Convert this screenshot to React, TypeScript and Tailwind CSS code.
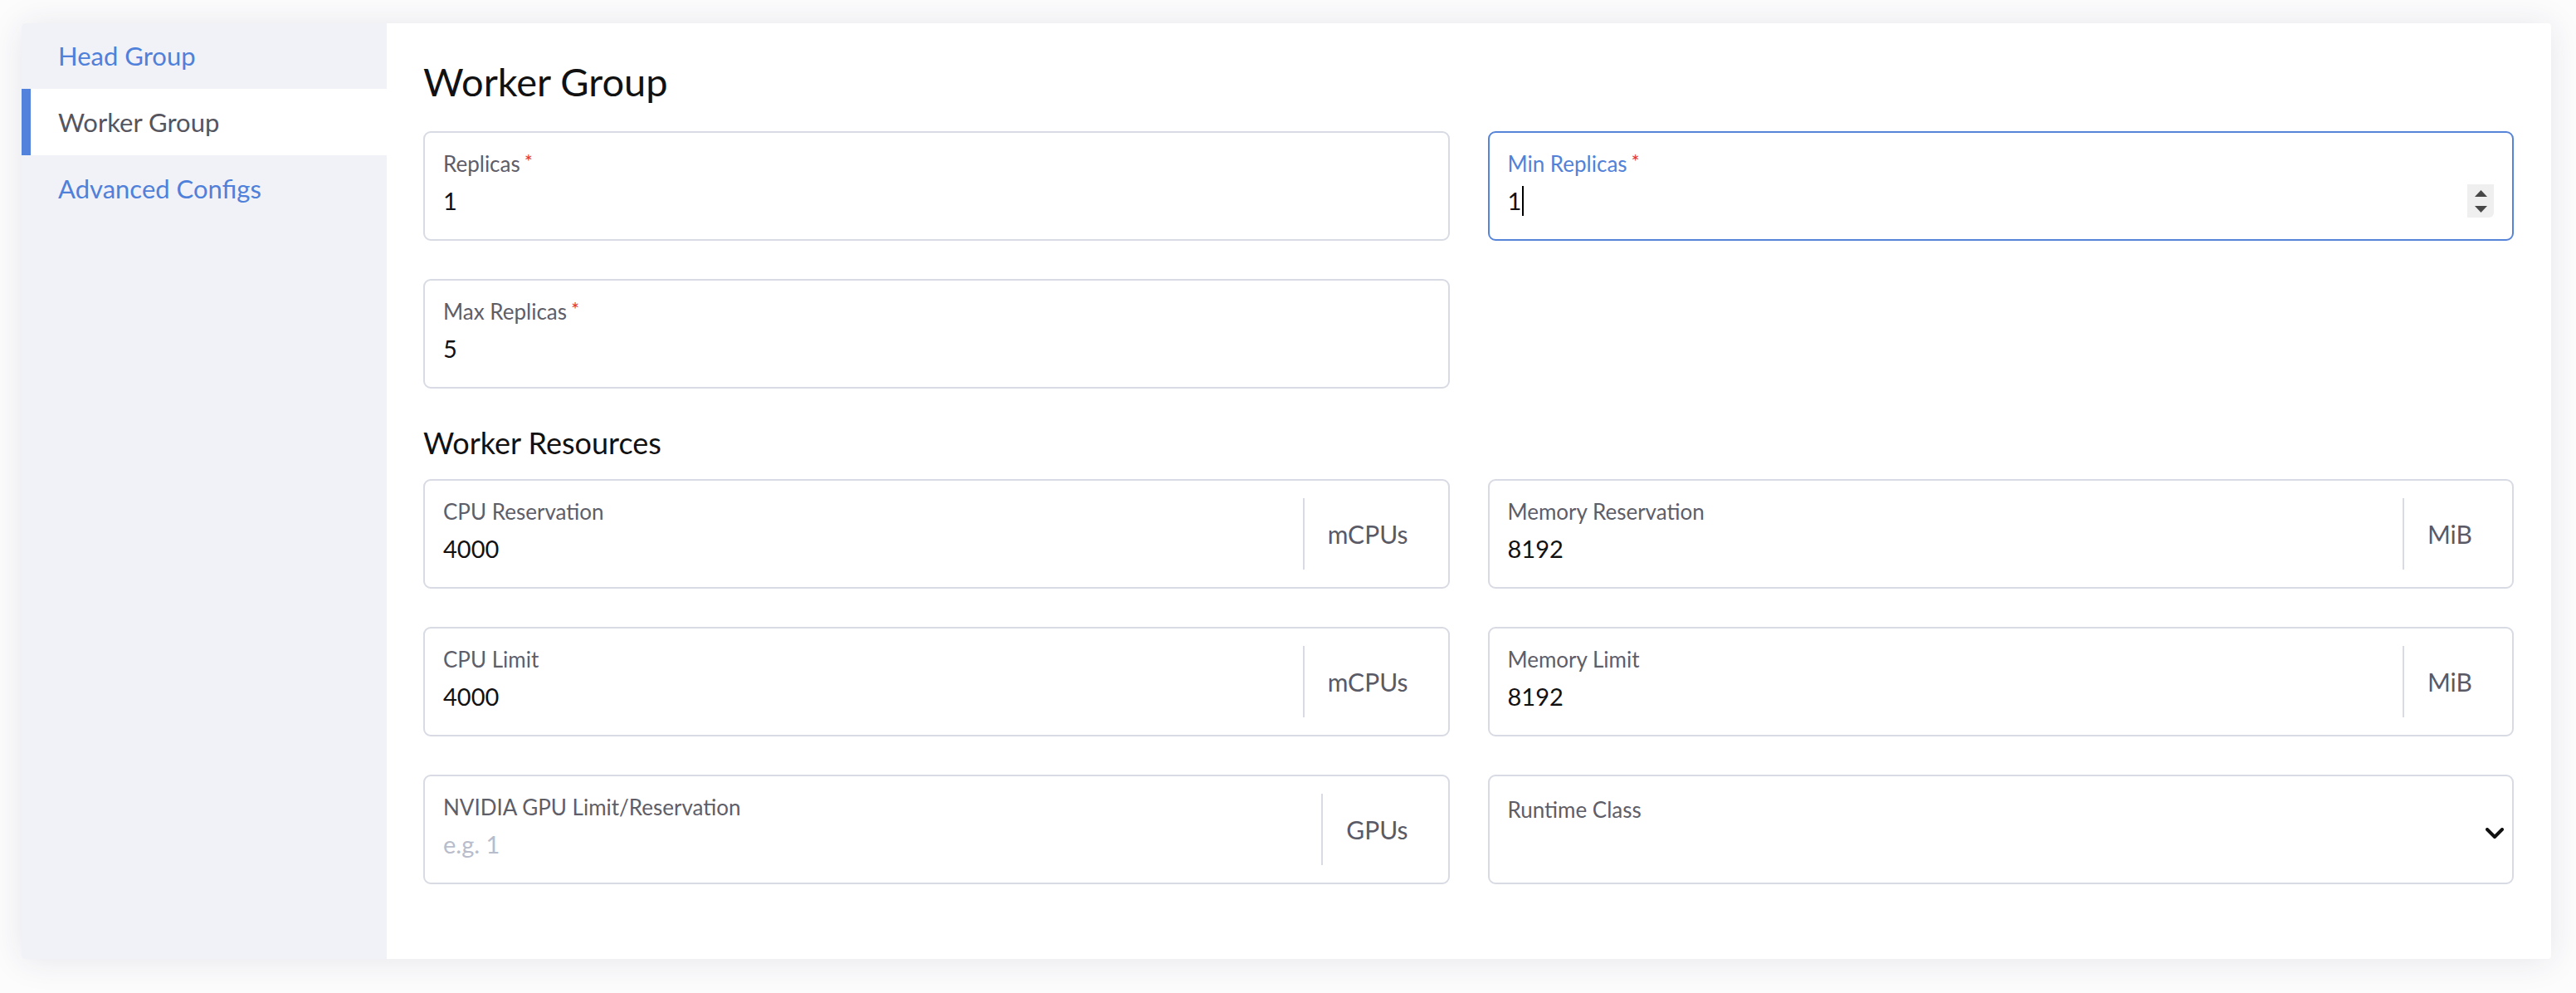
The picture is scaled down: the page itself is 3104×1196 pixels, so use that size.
import React from "react";

const FONT = { fontFamily: "Lato, 'Noto Sans', 'Liberation Sans', sans-serif" };

function Req() {
  return <span className="ml-[5px] text-[24px] leading-none text-[#e53935] relative -top-[4px]">*</span>;
}

function Label({ children, req, blue }: { children: React.ReactNode; req?: boolean; blue?: boolean }) {
  return (
    <div className={`text-[26px] leading-[32px] ${blue ? "text-[#5282d8]" : "text-[#5e5e69]"} whitespace-nowrap`}>
      {children}
      {req && <Req />}
    </div>
  );
}

function Field({
  label,
  value,
  req,
  suffix,
  placeholder,
}: {
  label: string;
  value?: string;
  req?: boolean;
  suffix?: string;
  placeholder?: string;
}) {
  return (
    <div className="h-[132px] border-2 border-[#d8dae4] rounded-[9px] bg-white flex">
      <div className="flex-1 pl-[22px] pr-[22px] pt-[21px]">
        <Label req={req}>{label}</Label>
        <div className="mt-[11px] text-[29px] leading-[36px]">
          {value ? (
            <span className="text-[#111111]">{value}</span>
          ) : (
            <span className="text-[#b8bccb]">{placeholder}</span>
          )}
        </div>
      </div>
      {suffix && (
        <div className="my-[21px] border-l-2 border-[#d8dae4] pl-[28px] pr-[48px] flex items-center text-[30px] text-[#5a5a66]">
          {suffix}
        </div>
      )}
    </div>
  );
}

function FocusedField() {
  return (
    <div className="h-[132px] border-2 border-[#5684d8] rounded-[9px] bg-white pl-[22px] pr-[22px] pt-[21px]">
      <Label req blue>
        Min Replicas
      </Label>
      <div className="mt-[11px] flex items-center justify-between h-[36px]">
        <div className="flex items-center text-[29px] leading-[36px] text-[#111111]">
          <span>1</span>
          <span className="inline-block w-[2px] h-[36px] bg-black ml-[1px]" />
        </div>
        <div className="w-[32px] h-[40px] bg-[#efefef] rounded-br-[6px] flex flex-col items-center justify-center gap-[11px]">
          <svg width="15" height="8" viewBox="0 0 15 8">
            <polygon points="7.5,0 15,8 0,8" fill="#474747" />
          </svg>
          <svg width="15" height="8" viewBox="0 0 15 8">
            <polygon points="0,0 15,0 7.5,8" fill="#474747" />
          </svg>
        </div>
      </div>
    </div>
  );
}

function SelectField({ label }: { label: string }) {
  return (
    <div className="h-[132px] border-2 border-[#d8dae4] rounded-[9px] bg-white flex pl-[22px] pr-[10px]">
      <div className="flex-1 pt-[24px]">
        <Label>{label}</Label>
      </div>
      <div className="flex items-center pt-[10px]">
        <svg width="22" height="14" viewBox="0 0 22 14">
          <polyline points="2,2 11,11 20,2" fill="none" stroke="#111" strokeWidth="4" strokeLinecap="round" strokeLinejoin="round" />
        </svg>
      </div>
    </div>
  );
}

export default function App() {
  return (
    <div className="min-h-screen bg-[#fcfcfd] pt-[28px] pl-[26px] pr-[30px] pb-[41px]" style={FONT}>
      <div className="flex h-[1127px] bg-white rounded-[4px] overflow-hidden shadow-[0_2px_40px_rgba(40,40,70,0.10)]">
        <aside className="w-[440px] bg-[#f1f2f7] flex flex-col">
          <div className="h-[79px] flex items-center pl-[44px] text-[31px] text-[#4f80da]">Head Group</div>
          <div className="h-[80px] flex items-center bg-white relative pl-[44px] text-[31px] text-[#55555f]">
            <span className="absolute left-0 top-0 bottom-0 w-[11px] bg-[#5282dc]" />
            Worker Group
          </div>
          <div className="h-[80px] flex items-center pl-[44px] text-[31px] text-[#4f80da]">Advanced Configs</div>
        </aside>
        <main className="flex-1 pl-[44px] pr-[45px] pt-[42px]">
          <h1 className="text-[47px] leading-[56px] text-[#111111] font-normal">Worker Group</h1>
          <div className="mt-[32px] grid grid-cols-2 gap-x-[46px] gap-y-[46px]">
            <Field label="Replicas" value="1" req />
            <FocusedField />
            <Field label="Max Replicas" value="5" req />
            <div />
          </div>
          <h2 className="mt-[43px] mb-[22px] text-[36px] leading-[44px] text-[#111111] font-normal">Worker Resources</h2>
          <div className="grid grid-cols-2 gap-x-[46px] gap-y-[46px]">
            <Field label="CPU Reservation" value="4000" suffix="mCPUs" />
            <Field label="Memory Reservation" value="8192" suffix="MiB" />
            <Field label="CPU Limit" value="4000" suffix="mCPUs" />
            <Field label="Memory Limit" value="8192" suffix="MiB" />
            <Field label="NVIDIA GPU Limit/Reservation" placeholder="e.g. 1" suffix="GPUs" />
            <SelectField label="Runtime Class" />
          </div>
        </main>
      </div>
    </div>
  );
}
